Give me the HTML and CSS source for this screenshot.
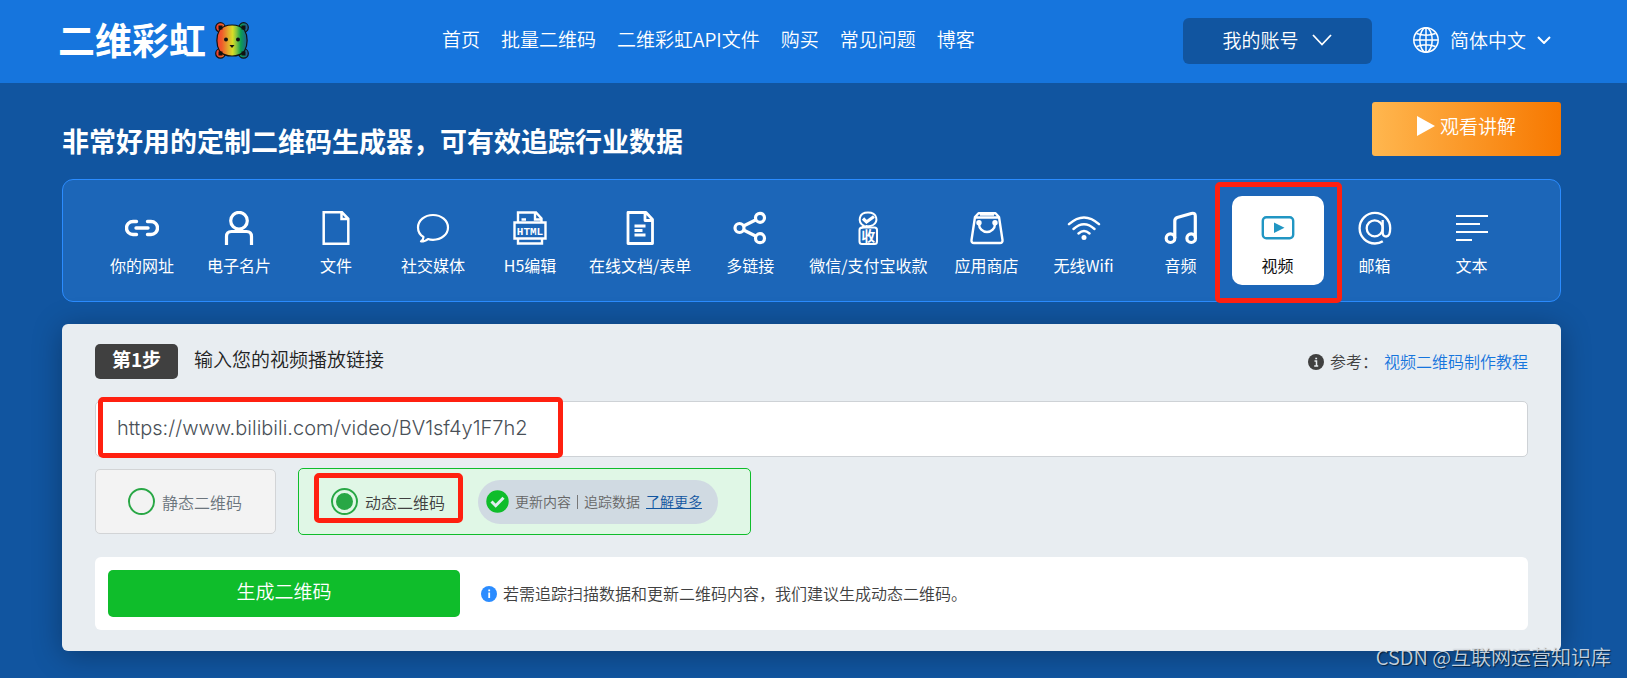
FILE: index.html
```html
<!DOCTYPE html>
<html lang="zh-CN">
<head>
<meta charset="utf-8">
<meta name="viewport" content="width=device-width, initial-scale=1">
<title>二维彩虹</title>
<link rel="stylesheet" href="styles.css">
</head>
<body>
<header class="topbar">
  <a class="logo" href="#">
    <span class="logo-text">二维彩虹</span>
    <svg class="logo-bear" viewBox="0 0 34 37" aria-hidden="true">
      <defs><linearGradient id="rainbow" gradientUnits="userSpaceOnUse" x1="0" y1="0" x2="34" y2="0">
        <stop offset="0.05" stop-color="#ef4130"/><stop offset="0.2" stop-color="#f15a2b"/><stop offset="0.4" stop-color="#e0b02c"/><stop offset="0.52" stop-color="#d8dd26"/><stop offset="0.64" stop-color="#7cc142"/><stop offset="0.76" stop-color="#0a9f50"/><stop offset="0.96" stop-color="#23569c"/>
      </linearGradient></defs>
      <g fill="url(#rainbow)" stroke="#111" stroke-width="1.2">
        <circle cx="5.4" cy="5.4" r="4.7"/><circle cx="28.6" cy="5.4" r="4.7"/><circle cx="5.4" cy="31.4" r="4.7"/><circle cx="28.6" cy="31.4" r="4.7"/>
        <path d="M17 3C23 3 27 5 29.500 8C33 14 33 23 29.500 29C27 32 23 34 17 34S7 32 4.500 29C1 23 1 14 4.500 8C7 5 11 3 17 3Z"/>
      </g>
      <path d="M3.500 3.500h4v4h-4zM26.500 3.500h4v4h-4zM3.500 29.500h4v4h-4zM26.500 29.500h4v4h-4z" fill="#111"/>
      <circle cx="11" cy="17.500" r="2" fill="#111"/><circle cx="23" cy="17.500" r="2" fill="#111"/>
      <path d="M14.500 23h5L17 26z" fill="#111"/>
    </svg>
  </a>
  <nav class="nav">
    <a href="#">首页</a><a href="#">批量二维码</a><a href="#">二维彩虹API文件</a><a href="#">购买</a><a href="#">常见问题</a><a href="#">博客</a>
  </nav>
  <button class="account" type="button">我的账号
    <svg width="20" height="12" viewBox="0 0 20 12" aria-hidden="true"><path d="M1 1l9 9.500L19 1" fill="none" stroke="currentColor" stroke-width="1.800"/></svg>
  </button>
  <button class="language" type="button">
    <svg width="26" height="26" viewBox="0 0 26 26" fill="none" stroke="currentColor" stroke-width="1.500" aria-hidden="true"><circle cx="13" cy="13" r="12.200"/><ellipse cx="13" cy="13" rx="6.200" ry="12.200"/><path d="M13 1v24M1 13h24M3.500 6.500q9.500 3.500 19 0M3.500 19.500q9.500-3.500 19 0"/></svg>
    <span>简体中文</span>
    <svg width="14" height="8" viewBox="0 0 14 8" aria-hidden="true"><path d="M1 1l6 6 6-6" fill="none" stroke="currentColor" stroke-width="2"/></svg>
  </button>
</header>

<main class="page">
  <div class="headline">
    <h1>非常好用的定制二维码生成器，可有效追踪行业数据</h1>
    <button class="watch" type="button">
      <svg width="18" height="20" viewBox="0 0 18 20" aria-hidden="true"><path d="M0 0l18 10L0 20z" fill="currentColor"/></svg>观看讲解
    </button>
  </div>

  <nav class="types" aria-label="二维码类型">
    <a class="type" href="#"><svg class="icon" viewBox="0 0 34 34"><g stroke-width="3.400" stroke-linecap="round"><path d="M11.500 10.500H8a6.500 6.500 0 0 0 0 13h3.500M22.500 10.500H26a6.500 6.500 0 0 1 0 13h-3.500M11 17h12"/></g></svg><span>你的网址</span></a>
    <a class="type" href="#"><svg class="icon" viewBox="0 0 34 34"><g stroke-width="3.200"><circle cx="17" cy="9.700" r="8.300"/><path d="M4.500 34v-8.500q0-5 5-5h15q5 0 5 5V34"/></g></svg><span>电子名片</span></a>
    <a class="type" href="#"><svg class="icon" viewBox="0 0 34 34"><path stroke-width="2.500" d="M4.700 1.300h18.300l6.300 6.500v25H4.700zM22.500 1v7h7"/></svg><span>文件</span></a>
    <a class="type" href="#"><svg class="icon" viewBox="0 0 34 34"><path stroke-width="2.200" stroke-linejoin="round" d="M17 4C8.500 4 2 9.500 2 16.500c0 4 2 7.500 5.500 9.500c0 2-1 3.500-2.500 4.500c3 0 5.500-1 7-2.500c1.500.600 3.200.800 5 .800c8.500 0 15-5.500 15-12.300S25.500 4 17 4z"/></svg><span>社交媒体</span></a>
    <a class="type" href="#"><svg class="icon" viewBox="0 0 34 34"><path stroke-width="2.400" d="M5 11V1.500h18l5.500 6v4M22 1.500v7h6M1.500 11.500h31v16h-31zM5 28v4.500h24V28M8.500 8.500h4.500"/><text class="icon-html" x="17" y="24" text-anchor="middle">HTML</text></svg><span>H5编辑</span></a>
    <a class="type" href="#"><svg class="icon" viewBox="0 0 34 34"><path stroke-width="2.800" stroke-linejoin="round" d="M5 1.500h18l6.500 7v24H5zM22 1.500v8h7.500M11.500 15h11M11.500 19.500h8M11.500 24h11"/></svg><span>在线文档/表单</span></a>
    <a class="type" href="#"><svg class="icon" viewBox="0 0 34 34"><g stroke-width="3.200"><circle cx="6.500" cy="17" r="4.500"/><circle cx="27" cy="6.800" r="4.500"/><circle cx="27" cy="27.200" r="4.500"/><path d="M10.500 15l12.500-6.200M10.500 19l12.500 6.200"/></g></svg><span>多链接</span></a>
    <a class="type" href="#"><svg class="icon" viewBox="0 0 34 34"><path stroke-width="2" d="M12.500 14.500C6.500 11 7.500 1.500 17 1.500s10.500 9 5 12.500q-3 1.700-6.500 1l-4 1.500z"/><path stroke-width="3.200" d="M12 7.500l3.500 3.500 7.500-5.500"/><rect x="8.500" y="16.500" width="17.500" height="16.500" rx="2.500" stroke-width="2"/><text class="icon-pay" x="17.200" y="30" text-anchor="middle">收</text></svg><span>微信/支付宝收款</span></a>
    <a class="type" href="#"><svg class="icon" viewBox="0 0 34 34"><path stroke-width="2.400" stroke-linejoin="round" d="M5 6L8.500 2.200h17L29 6l3.500 23q.300 3-2.500 3H4q-2.800 0-2.500-3zM5 6.500h24M9 11.500v1.500a8 8 0 0 0 16 0v-1.500M10 3.500h14"/><circle class="solid" cx="9" cy="11.800" r="2.700"/><circle class="solid" cx="25" cy="11.800" r="2.700"/></svg><span>应用商店</span></a>
    <a class="type" href="#"><svg class="icon" viewBox="0 0 34 34"><path stroke-width="2.400" stroke-linecap="round" d="M2 13.200q15-13.600 30 0M6.500 18q10.500-9.500 21 0M11.500 22.500q5.500-4.800 11 0"/><circle class="solid" cx="17" cy="26.500" r="2.500"/></svg><span>无线Wifi</span></a>
    <a class="type" href="#"><svg class="icon" viewBox="0 0 34 34"><g stroke-width="3.200"><circle cx="6.500" cy="27.200" r="4.300"/><circle cx="27.200" cy="27.200" r="4.300"/><path d="M10.800 27V10q0-2.500 2.500-3.500l14-4q4-1 4 2.500v22"/></g></svg><span>音频</span></a>
    <a class="type active" href="#" aria-current="page"><svg class="icon" viewBox="0 0 34 34"><rect x="1.800" y="6.300" width="30.400" height="21" rx="3.500" stroke-width="2.400"/><path class="solid" d="M13 11.500l10.500 5.300L13 22z"/></svg><span>视频</span><i class="mark mark-type"></i></a>
    <a class="type" href="#"><svg class="icon" viewBox="0 0 34 34"><g stroke-width="2.300"><circle cx="16.700" cy="17.300" r="8"/><path d="M24.700 9v12.500q0 4 3.500 4q4 0 4-8.200A15.300 15.300 0 1 0 17 32.500q4.500 0 7.800-2.200"/></g></svg><span>邮箱</span></a>
    <a class="type" href="#"><svg class="icon" viewBox="0 0 34 34"><path stroke-width="2" d="M1 5h32M1 13h24M1 21h32M1 29h16"/></svg><span>文本</span></a>
  </nav>

  <form class="card">
    <div class="step">
      <strong class="badge">第1步</strong>
      <label class="step-label" for="url">输入您的视频播放链接</label>
      <p class="reference">
        <svg width="16" height="16" viewBox="0 0 16 16" aria-hidden="true"><circle cx="8" cy="8" r="8" fill="#404040"/><path d="M6.500 7H8.500V12M6.200 12h4M7.300 4.500h1.800" fill="none" stroke="#e8edf1" stroke-width="1.500"/></svg>
        <span>参考：</span><a href="#">视频二维码制作教程</a>
      </p>
    </div>
    <div class="field">
      <input id="url" class="url" type="text" value="https://www.bilibili.com/video/BV1sf4y1F7h2">
      <i class="mark mark-url"></i>
    </div>
    <div class="options">
      <label class="option"><input type="radio" name="kind">静态二维码</label>
      <div class="option option-on">
        <label class="choice"><input type="radio" name="kind" checked>动态二维码<i class="mark mark-choice"></i></label>
        <p class="pill">
          <svg width="23" height="23" viewBox="0 0 23 23" aria-hidden="true"><circle cx="11.500" cy="11.500" r="11.200" fill="#0fbd2b"/><path d="M5.500 11.500l4.200 4.200 7.800-8" fill="none" stroke="#e0eef0" stroke-width="3"/></svg>
          <span>更新内容</span><span class="divider"></span><span>追踪数据</span><a href="#">了解更多</a>
        </p>
      </div>
    </div>
    <div class="submit-row">
      <button class="submit" type="button">生成二维码</button>
      <p class="hint"><svg width="16" height="16" viewBox="0 0 16 16" aria-hidden="true"><circle cx="8" cy="8" r="8" fill="#2b8cff"/><path d="M8.200 6.500V12M8.200 3.500v1.800" fill="none" stroke="#fff" stroke-width="1.800"/></svg><span>若需追踪扫描数据和更新二维码内容，我们建议生成动态二维码。</span></p>
    </div>
  </form>
</main>
<div class="watermark">CSDN @互联网运营知识库</div>
</body>
</html>
```
FILE: styles.css
```css
* { box-sizing: border-box; }

body {
  position: relative;
  margin: 0;
  background: #1155a0;
  color: #404040;
  font-family: "Noto Sans CJK SC", sans-serif;
  font-size: 16px;
  font-weight: 350;
  line-height: 24px;
}

a { color: inherit; text-decoration: none; }
p, h1 { margin: 0; }
svg { display: block; flex: none; }
button, input { font: inherit; color: inherit; margin: 0; }
button { border: 0; padding: 0; cursor: pointer; }

.topbar {
  display: flex;
  align-items: center;
  min-height: 83px;
  padding: 0 76px 2px 58px;
  background: #1675dd;
  color: #fff;
  font-size: 19px;
}

.logo { display: flex; align-items: center; gap: 9px; }
.logo-text { padding-bottom: 4px; font-size: 37px; font-weight: 700; line-height: 44px; }
.logo-bear { width: 34px; height: 37px; }

.nav { display: flex; gap: 21px; margin-left: 193px; padding-bottom: 3px; white-space: nowrap; }

.account {
  display: flex;
  align-items: center;
  justify-content: center;
  gap: 14px;
  width: 189px;
  height: 46px;
  margin-left: auto;
  padding-bottom: 2px;
  border-radius: 6px;
  background: #1155a0;
  color: #fff;
}

.language {
  display: flex;
  align-items: center;
  gap: 11px;
  margin-left: 41px;
  padding-bottom: 2px;
  background: none;
  color: #fff;
  white-space: nowrap;
}

.page { padding: 19px 66px 26px 62px; }

.headline {
  display: flex;
  align-items: flex-start;
  justify-content: space-between;
  margin-bottom: 18px;
  color: #fff;
}
.headline h1 { margin-top: 19px; font-size: 27px; font-weight: 700; line-height: 40px; }

.watch {
  display: flex;
  align-items: center;
  justify-content: center;
  gap: 5px;
  width: 189px;
  height: 54px;
  padding-bottom: 6px;
  border-radius: 3px;
  background: linear-gradient(90deg, #ffb74f, #f77800);
  color: #fff;
  font-size: 19px;
}

.types {
  display: flex;
  gap: 5px;
  padding: 16px 33px;
  border: 1px solid #2b8cff;
  border-radius: 11px;
  background: #1c66b8;
  color: #fff;
  font-weight: 400;
  white-space: nowrap;
}
.type {
  position: relative;
  display: flex;
  flex-direction: column;
  align-items: center;
  gap: 8px;
  min-width: 92px;
  padding: 15px 8px 8px;
  border-radius: 10px;
}
.icon { width: 34px; height: 34px; fill: none; stroke: currentColor; }
.icon .solid { fill: currentColor; stroke: none; }
.icon-html, .icon-pay { fill: currentColor; stroke: none; font-weight: 700; }
.icon-html { font-family: "Liberation Mono", monospace; font-size: 11px; }
.icon-pay { font-size: 14px; }
.type.active { background: #fff; color: #111; }
.type.active .icon { color: #2196c3; }

.mark {
  position: absolute;
  border: 5px solid #ff2010;
  border-radius: 5px;
  pointer-events: none;
}
.mark-type { inset: -14px -18px -18px -17px; }
.mark-url { top: -4px; bottom: -1px; left: 3px; width: 465px; }
.mark-choice { inset: -15px -18px -8px -17px; }

.card {
  margin-top: 22px;
  padding: 20px 33px 21px;
  border-radius: 6px;
  background: #e8edf1;
  box-shadow: 0 4px 30px rgba(0, 0, 0, 0.3);
}

.step { display: flex; align-items: center; gap: 16px; }
.badge {
  width: 83px;
  height: 35px;
  border-radius: 5px;
  background: #404040;
  color: #fff;
  font-size: 19px;
  font-weight: 700;
  line-height: 30px;
  text-align: center;
}
.step-label { padding-bottom: 6px; color: #222; font-size: 19px; }
.reference { display: flex; align-items: center; gap: 6px; margin-left: auto; }
.reference span, .reference a, .pill span, .pill a, .hint span { padding-bottom: 2px; }
.reference a { color: #1675dd; }

.field { position: relative; margin-top: 22px; }
.url {
  display: block;
  width: 100%;
  height: 56px;
  padding: 0 21px 2px;
  border: 1px solid #ced2d6;
  border-radius: 5px;
  background: #fff;
  color: #495057;
  font-family: Inter, sans-serif;
  font-size: 20px;
}

.options { display: flex; align-items: center; gap: 22px; margin-top: 11px; }
.option {
  display: flex;
  align-items: center;
  gap: 7px;
  height: 65px;
  padding: 0 33px 0 32px;
  border: 1px solid #d2d4d6;
  border-radius: 5px;
  background: #f3f3f3;
  color: #6c757d;
}
.option input {
  appearance: none;
  flex: none;
  width: 27px;
  height: 27px;
  padding: 3px;
  border: 2px solid #28a745;
  border-radius: 50%;
  background: content-box transparent;
}
.option input:checked { background-color: #28a745; }
.option-on {
  gap: 33px;
  height: 67px;
  padding: 0 32px;
  border-color: #0fbd2b;
  background: #e0f7e6;
  color: #404040;
}
.choice { position: relative; display: flex; align-items: center; gap: 7px; }

.pill {
  display: flex;
  align-items: center;
  gap: 6px;
  height: 44px;
  padding: 0 16px 0 8px;
  border-radius: 22px;
  background: #d0dae2;
  color: #666;
  font-size: 14px;
}
.pill a { color: #1155a0; text-decoration: underline; }
.divider { width: 1px; height: 14px; background: #777; }

.submit-row {
  display: flex;
  align-items: center;
  gap: 21px;
  margin-top: 22px;
  padding: 13px;
  border-radius: 6px;
  background: #fff;
}
.submit {
  width: 352px;
  height: 47px;
  padding-bottom: 5px;
  border-radius: 5px;
  background: #0fbd2b;
  color: #fff;
  font-size: 19px;
}
.hint { display: flex; align-items: center; gap: 6px; }

.watermark {
  position: absolute;
  right: 16px;
  bottom: 8px;
  color: rgba(220, 226, 232, 0.9);
  font-size: 20px;
  text-shadow: 1px 1px 1px rgba(0, 0, 0, 0.6);
}
```
